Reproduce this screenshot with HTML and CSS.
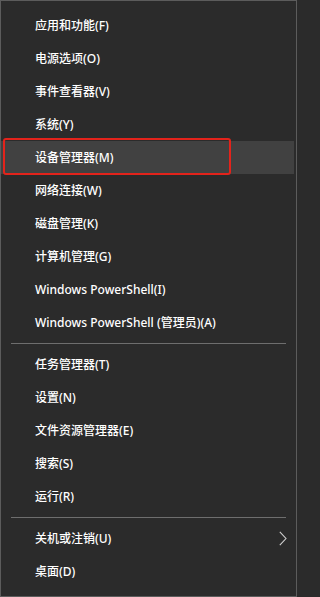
FILE: index.html
```html
<!DOCTYPE html>
<html lang="zh-CN">
<head>
<meta charset="utf-8">
<link rel="stylesheet" href="styles.css">
</head>
<body>
<div class="menu">
  <div class="item">应用和功能(F)</div>
  <div class="item">电源选项(O)</div>
  <div class="item">事件查看器(V)</div>
  <div class="item">系统(Y)</div>
  <div class="item active">设备管理器(M)</div>
  <div class="item">网络连接(W)</div>
  <div class="item">磁盘管理(K)</div>
  <div class="item">计算机管理(G)</div>
  <div class="item">Windows PowerShell(I)</div>
  <div class="item">Windows PowerShell (管理员)(A)</div>
  <div class="sep"></div>
  <div class="item">任务管理器(T)</div>
  <div class="item">设置(N)</div>
  <div class="item">文件资源管理器(E)</div>
  <div class="item">搜索(S)</div>
  <div class="item">运行(R)</div>
  <div class="sep"></div>
  <div class="item sub"><span>关机或注销(U)</span><svg class="chev" width="8" height="15" viewBox="0 0 8 15"><path d="M0.8 0.8 L7 7.5 L0.8 14.2" fill="none" stroke="#d0d0d0" stroke-width="1.1"/></svg></div>
  <div class="item">桌面(D)</div>
</div>
</body>
</html>
```
FILE: styles.css
```css
html, body {
  margin: 0;
  padding: 0;
  background: #2b2b2b;
}
.menu {
  box-sizing: border-box;
  width: 297px;
  height: 597px;
  background: #2b2b2b;
  border: 1px solid #5c5c5c;
  padding: 8px 0;
  font-family: "Noto Sans", "Noto Sans CJK SC", sans-serif;
  font-size: 12px;
  font-weight: 500;
  color: #ffffff;
}
.item {
  position: relative;
  height: 33px;
  line-height: 33px;
  padding-left: 34px;
  white-space: nowrap;
}
.item.active {
  background: #414141;
  margin-right: 2px;
}
.item.active::after {
  content: "";
  position: absolute;
  left: 2px;
  top: -3px;
  width: 228px;
  height: 37px;
  box-sizing: border-box;
  border: 2px solid #e3231b;
  border-radius: 3px;
}
.item.sub {
  display: flex;
  justify-content: space-between;
  align-items: center;
  padding-right: 9px;
}
.chev {
  display: block;
}
.sep {
  height: 1px;
  margin: 4px 10px;
  background: #6e6e6e;
}
```
